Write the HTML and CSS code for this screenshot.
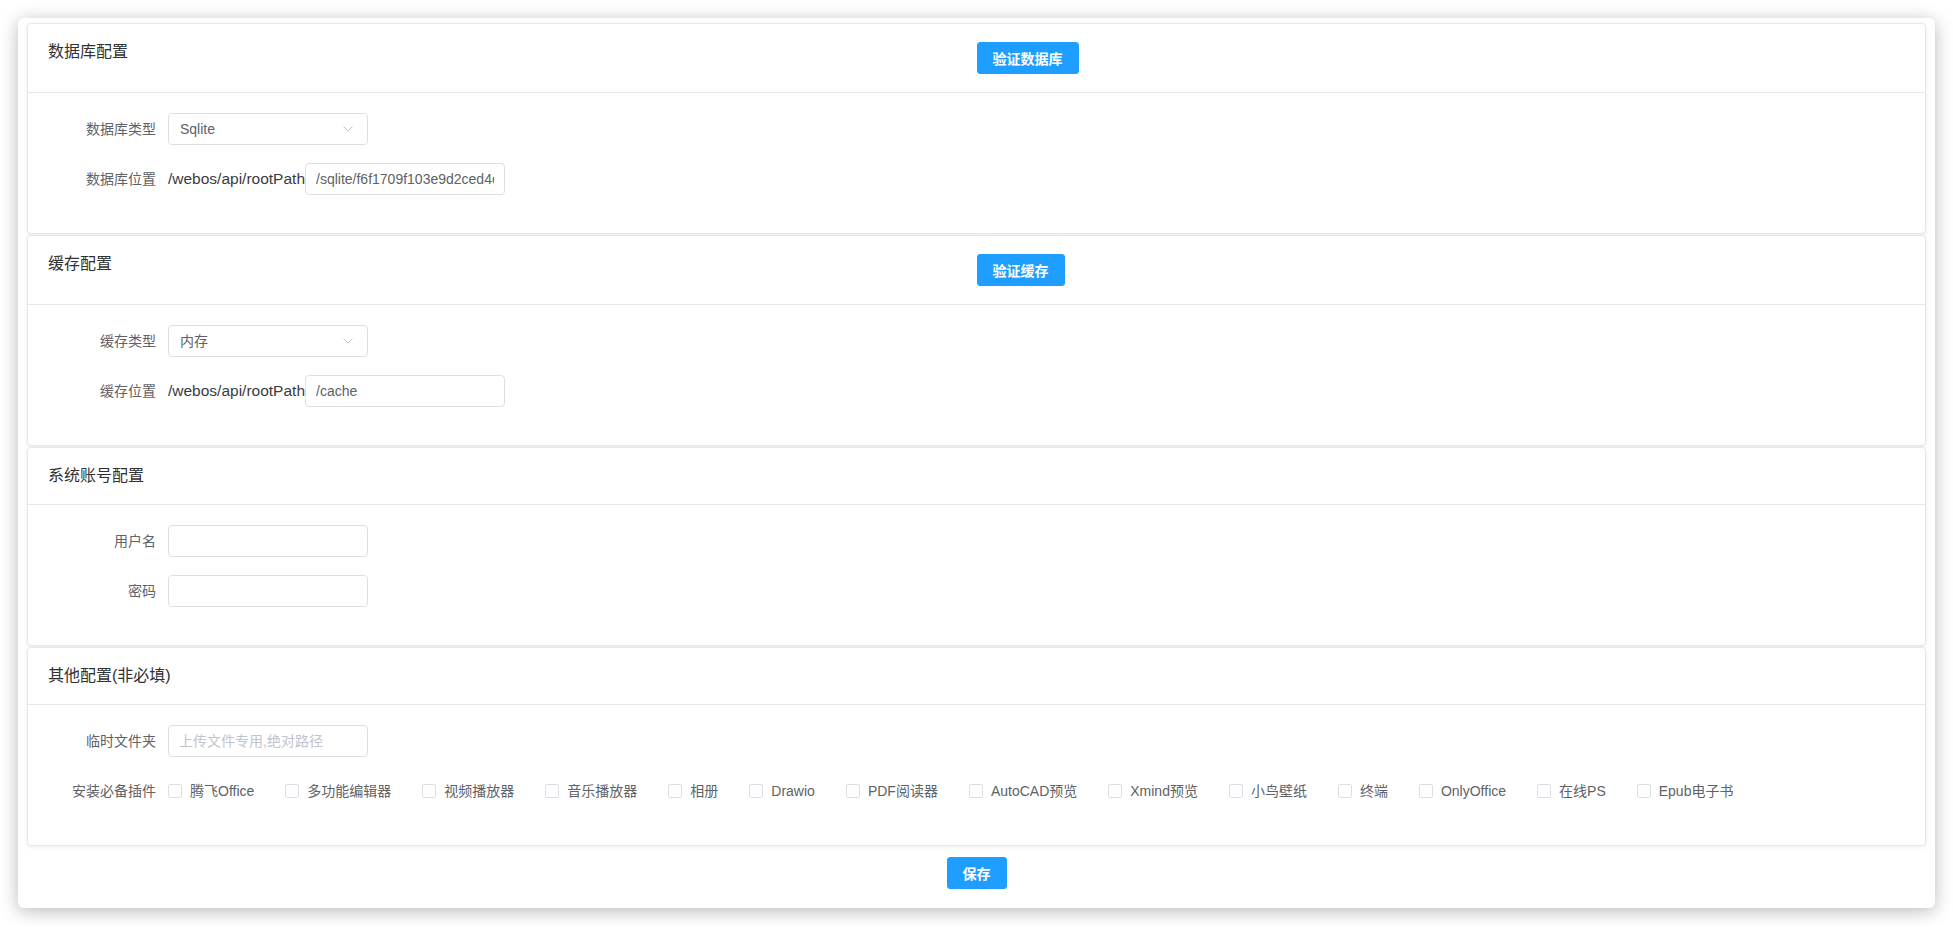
FILE: index.html
```html
<!DOCTYPE html>
<html lang="zh-CN">
<head>
<meta charset="utf-8">
<title>配置</title>
<link rel="stylesheet" href="styles.css">
</head>
<body>
<div class="window">
  <section class="card">
    <div class="card-header">
      <div class="card-title">数据库配置</div>
      <div class="card-action"><button class="btn">验证数据库</button></div>
    </div>
    <div class="card-body">
      <div class="form-item">
        <label class="form-label">数据库类型</label>
        <div class="form-content">
          <div class="select"><span class="select-value">Sqlite</span>
            <svg class="chevron" width="10" height="6" viewBox="0 0 10 6"><polyline points="0.5,0.5 5,5 9.5,0.5" fill="none" stroke="#c0c4cc" stroke-width="1"/></svg>
          </div>
        </div>
      </div>
      <div class="form-item">
        <label class="form-label">数据库位置</label>
        <div class="form-content">
          <span class="prefix">/webos/api/rootPath</span>
          <input class="input" type="text" value="/sqlite/f6f1709f103e9d2ced4c8e21a.db">
        </div>
      </div>
    </div>
  </section>

  <section class="card">
    <div class="card-header">
      <div class="card-title">缓存配置</div>
      <div class="card-action"><button class="btn">验证缓存</button></div>
    </div>
    <div class="card-body">
      <div class="form-item">
        <label class="form-label">缓存类型</label>
        <div class="form-content">
          <div class="select"><span class="select-value">内存</span>
            <svg class="chevron" width="10" height="6" viewBox="0 0 10 6"><polyline points="0.5,0.5 5,5 9.5,0.5" fill="none" stroke="#c0c4cc" stroke-width="1"/></svg>
          </div>
        </div>
      </div>
      <div class="form-item">
        <label class="form-label">缓存位置</label>
        <div class="form-content">
          <span class="prefix">/webos/api/rootPath</span>
          <input class="input" type="text" value="/cache">
        </div>
      </div>
    </div>
  </section>

  <section class="card">
    <div class="card-header">
      <div class="card-title">系统账号配置</div>
    </div>
    <div class="card-body">
      <div class="form-item">
        <label class="form-label">用户名</label>
        <div class="form-content"><input class="input" type="text"></div>
      </div>
      <div class="form-item">
        <label class="form-label">密码</label>
        <div class="form-content"><input class="input" type="password"></div>
      </div>
    </div>
  </section>

  <section class="card">
    <div class="card-header">
      <div class="card-title">其他配置(非必填)</div>
    </div>
    <div class="card-body">
      <div class="form-item">
        <label class="form-label">临时文件夹</label>
        <div class="form-content"><input class="input" type="text" placeholder="上传文件专用,绝对路径"></div>
      </div>
      <div class="form-item">
        <label class="form-label">安装必备插件</label>
        <div class="form-content checks">
          <label class="check"><span class="box"></span><span class="check-text">腾飞Office</span></label>
          <label class="check"><span class="box"></span><span class="check-text">多功能编辑器</span></label>
          <label class="check"><span class="box"></span><span class="check-text">视频播放器</span></label>
          <label class="check"><span class="box"></span><span class="check-text">音乐播放器</span></label>
          <label class="check"><span class="box"></span><span class="check-text">相册</span></label>
          <label class="check"><span class="box"></span><span class="check-text">Drawio</span></label>
          <label class="check"><span class="box"></span><span class="check-text">PDF阅读器</span></label>
          <label class="check"><span class="box"></span><span class="check-text">AutoCAD预览</span></label>
          <label class="check"><span class="box"></span><span class="check-text">Xmind预览</span></label>
          <label class="check"><span class="box"></span><span class="check-text">小鸟壁纸</span></label>
          <label class="check"><span class="box"></span><span class="check-text">终端</span></label>
          <label class="check"><span class="box"></span><span class="check-text">OnlyOffice</span></label>
          <label class="check"><span class="box"></span><span class="check-text">在线PS</span></label>
          <label class="check"><span class="box"></span><span class="check-text">Epub电子书</span></label>
        </div>
      </div>
    </div>
  </section>

  <div class="footer"><button class="btn">保存</button></div>
</div>
</body>
</html>
```

FILE: styles.css
```css
* { box-sizing: border-box; }

html, body {
  margin: 0;
  padding: 0;
  background: #ffffff;
}

body {
  padding: 18px;
  font-family: "Liberation Sans", "Noto Sans CJK SC", sans-serif;
  font-size: 14px;
  color: #606266;
}

.window {
  background: #ffffff;
  border-radius: 6px;
  box-shadow: 0 3px 18px rgba(0, 0, 0, 0.28);
  padding: 5px 9px 19px 9px;
  height: 890px;
}

.card {
  background: #fff;
  border: 1px solid #e6e8ee;
  border-radius: 4px;
  box-shadow: 0 1px 4px rgba(0, 0, 0, 0.08);
  margin-bottom: 1px;
}

.card-header {
  display: grid;
  grid-template-columns: 1fr 1fr;
  align-items: start;
  padding: 18px 20px;
  border-bottom: 1px solid #e6e8ee;
}

.card-title {
  font-size: 16px;
  line-height: 20px;
  color: #303133;
}

.card-body {
  padding: 20px 20px 2px 20px;
}

.form-item {
  display: flex;
  align-items: flex-start;
  margin-bottom: 18px;
}

.form-item:last-child {
  margin-bottom: 36px;
}

.form-label {
  width: 120px;
  flex: 0 0 120px;
  padding-right: 12px;
  text-align: right;
  line-height: 32px;
  font-size: 14px;
  color: #606266;
}

.form-content {
  display: flex;
  align-items: center;
  min-height: 32px;
}

.select,
.input {
  width: 200px;
  height: 32px;
  border: 1px solid #dcdfe6;
  border-radius: 4px;
  background: #fff;
  font-family: "Liberation Sans", "Noto Sans CJK SC", sans-serif;
  font-size: 14px;
  color: #606266;
}

.select {
  display: flex;
  align-items: center;
  justify-content: space-between;
  padding: 0 14px 0 11px;
}

.select-value {
  line-height: 30px;
}

.chevron { display: block; }

.input {
  padding: 0 10px;
  outline: none;
}

.input::placeholder {
  color: #c0c4cc;
}

.prefix {
  font-size: 15.5px;
  color: #3a3b3e;
  line-height: 32px;
  white-space: nowrap;
}

.checks {
  flex-wrap: wrap;
  line-height: 32px;
}

.check {
  display: inline-flex;
  align-items: center;
  margin-right: 31px;
  color: #606266;
  font-size: 14px;
  white-space: nowrap;
}

.box {
  width: 14px;
  height: 14px;
  border: 1px solid #dcdfe6;
  border-radius: 2px;
  background: #fff;
}

.check-text {
  padding-left: 8px;
}

.btn {
  height: 32px;
  padding: 0 15px;
  border: 1px solid #1e9fff;
  border-radius: 3px;
  background: #1e9fff;
  color: #fff;
  font-family: "Liberation Sans", "Noto Sans CJK SC", sans-serif;
  font-size: 14px;
  font-weight: 700;
  cursor: pointer;
}

.footer {
  display: flex;
  justify-content: center;
  padding-top: 10px;
}
```
